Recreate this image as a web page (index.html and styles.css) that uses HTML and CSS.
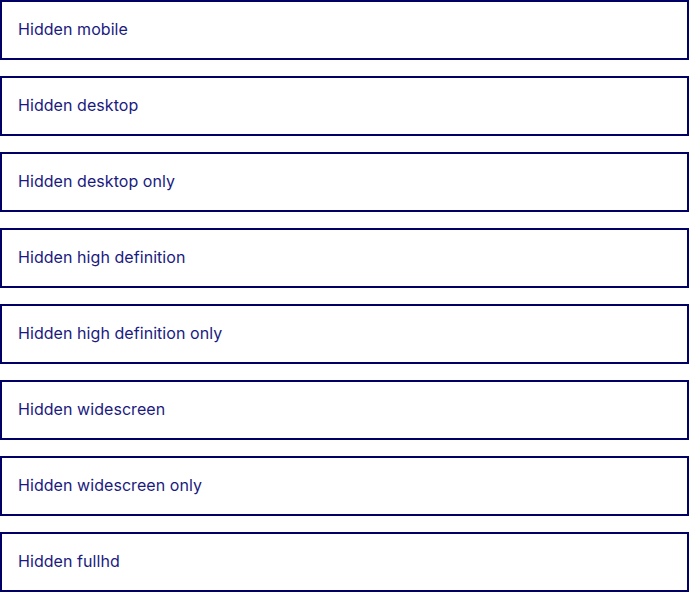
FILE: index.html
```html
<!DOCTYPE html>
<html>
<head>
<meta charset="utf-8">
<link rel="stylesheet" href="styles.css">
</head>
<body>
<div class="list">
  <div class="box">Hidden mobile</div>
  <div class="box">Hidden desktop</div>
  <div class="box">Hidden desktop only</div>
  <div class="box">Hidden high definition</div>
  <div class="box">Hidden high definition only</div>
  <div class="box">Hidden widescreen</div>
  <div class="box">Hidden widescreen only</div>
  <div class="box">Hidden fullhd</div>
</div>
</body>
</html>
```
FILE: styles.css
```css
html, body { margin: 0; padding: 0; background: #fff; }
.list { display: flex; flex-direction: column; gap: 16px; }
.box {
  box-sizing: border-box;
  height: 60px;
  border: 2px solid #000066;
  padding: 0 16px 2px;
  display: flex;
  align-items: center;
  font-family: Inter, sans-serif;
  font-size: 16px;
  letter-spacing: 0.06px;
  color: #1a1a80;
}
```
